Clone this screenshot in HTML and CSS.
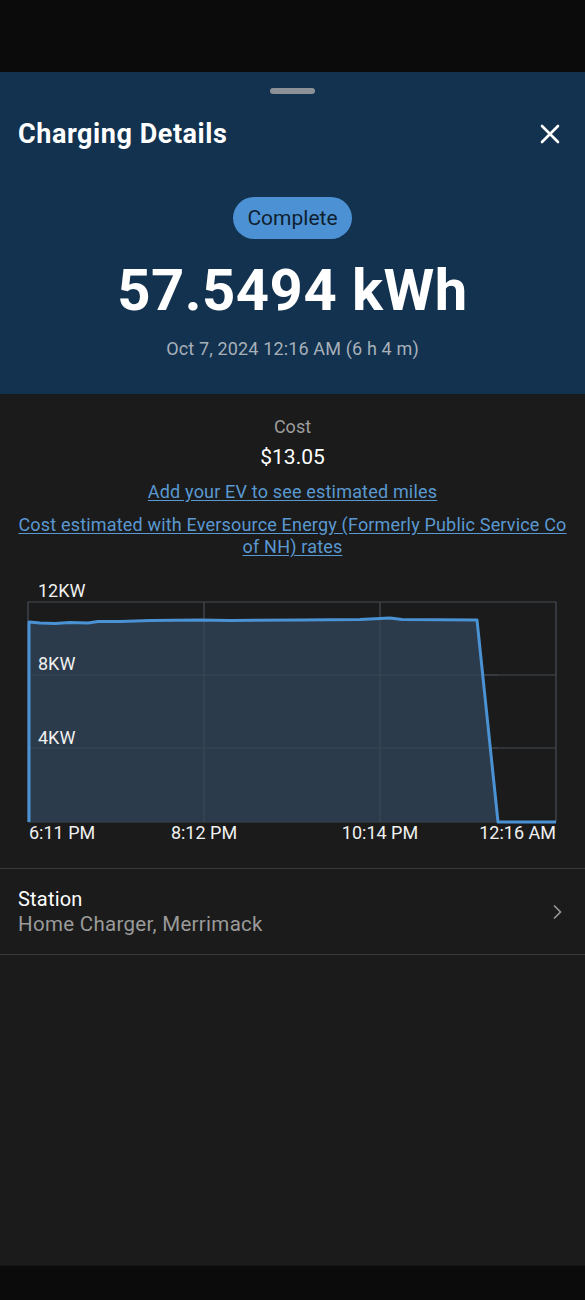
FILE: index.html
```html
<!DOCTYPE html>
<html lang="en">
<head>
    <meta charset="UTF-8">
    <meta name="viewport" content="width=device-width, initial-scale=1.0">
    <title>Charging Details</title>
    <link rel="stylesheet" href="styles.css">
</head>
<body>
    <div class="statusBar"></div>
    <div class="sheet">
        <div class="head">
            <div class="handle"></div>
            <div class="titleRow">
                <h1>Charging Details</h1>
                <svg class="close" width="20" height="20" viewBox="0 0 20 20"><path d="M2 2L18 18M18 2L2 18" stroke="#fff" stroke-width="2.6" stroke-linecap="round"/></svg>
            </div>
            <span class="pill">Complete</span>
            <div class="energy">57.5494 kWh</div>
            <div class="date">Oct 7, 2024 12:16 AM (6 h 4 m)</div>
        </div>

        <div class="summary">
            <div class="label">Cost</div>
            <div class="cost">$13.05</div>
            <a class="link" href="#">Add your EV to see estimated miles</a>
            <a class="link" href="#">Cost estimated with Eversource Energy (Formerly Public Service Co of NH) rates</a>
        </div>

        <svg class="chart" width="585" height="275" viewBox="0 0 585 275">
            <!-- grid -->
            <g stroke="#474c52" stroke-width="1.2">
                <line x1="28" y1="27" x2="556" y2="27"/>
                <line x1="28" y1="100" x2="556" y2="100"/>
                <line x1="28" y1="173" x2="556" y2="173"/>
                <line x1="28" y1="247" x2="556" y2="247"/>
                <line x1="28" y1="27" x2="28" y2="247"/>
                <line x1="204" y1="27" x2="204" y2="247"/>
                <line x1="380" y1="27" x2="380" y2="247"/>
                <line x1="556" y1="27" x2="556" y2="247"/>
            </g>
            <polygon fill="#2c3e4f" fill-opacity="0.92" points="28,247 28,47 40,48 55,48.5 70,47.5 88,48 98,46.5 120,46.5 150,45.5 200,45 230,45.5 300,45 360,44.5 390,43 402,44.5 477,45 498,247"/>
            <g stroke="#474c52" stroke-width="1" opacity="0.6">
                <line x1="28" y1="100" x2="498" y2="100"/>
                <line x1="28" y1="173" x2="498" y2="173"/>
                <line x1="204" y1="45" x2="204" y2="247"/>
                <line x1="380" y1="43" x2="380" y2="247"/>
            </g>
            <polyline fill="none" stroke="#4a92d4" stroke-width="3" stroke-linejoin="round" points="29,247 29,47 40,48 55,48.5 70,47.5 88,48 98,46.5 120,46.5 150,45.5 200,45 230,45.5 300,45 360,44.5 390,43 402,44.5 477,45 498,247 556,247"/>
            <g class="axis">
                <text x="38" y="22">12KW</text>
                <text x="38" y="95">8KW</text>
                <text x="38" y="169">4KW</text>
                <text x="29" y="264">6:11 PM</text>
                <text x="204" y="264" text-anchor="middle">8:12 PM</text>
                <text x="380" y="264" text-anchor="middle">10:14 PM</text>
                <text x="556" y="264" text-anchor="end">12:16 AM</text>
            </g>
        </svg>

        <div class="station">
            <div>
                <div class="stTitle">Station</div>
                <div class="stName">Home Charger, Merrimack</div>
            </div>
            <svg width="10" height="16" viewBox="0 0 10 16"><path d="M2 1.5L8.5 8L2 14.5" fill="none" stroke="#9a9a9a" stroke-width="1.6"/></svg>
        </div>
    </div>
    <div class="navBar"></div>
</body>
</html>
```

FILE: styles.css
```css
*{margin: 0; padding: 0; box-sizing: border-box;}
html, body{height: 100%;}
body{display: flex; flex-direction: column; background-color: #0b0b0b; font-family: Roboto, "Liberation Sans", sans-serif; color: #fff;}
.statusBar{height: 72px; background-color: #0b0b0b;}
.navBar{height: 35px; background-color: #0b0b0b; border-top: 1px solid #161616;}
.sheet{flex: 1; background-color: #1b1b1b;}

.head{height: 322px; background-color: #12324f; display: flex; flex-direction: column; align-items: center;}
.handle{width: 45px; height: 6px; margin-top: 16px; border-radius: 3px; background-color: #8c9197;}
.titleRow{width: 100%; display: flex; justify-content: space-between; align-items: center; margin-top: 24px; padding: 0 25px 0 18px; height: 32px;}
.titleRow h1{font-size: 27px; font-weight: 700; line-height: 32px; letter-spacing: 0.55px;}
.pill{margin-top: 47px; height: 42px; line-height: 42px; padding: 0 14px; border-radius: 21px; background-color: #4c91d3; color: #0f1f30; font-size: 21px;}
.energy{margin-top: 17px; font-size: 58px; font-weight: 700; line-height: 68px; letter-spacing: 0.5px;}
.date{margin-top: 14px; font-size: 18px; line-height: 22px; color: #a7b0b9; letter-spacing: 0.15px;}

.summary{display: flex; flex-direction: column; align-items: center; text-align: center; padding: 22px 10px 0;}
.label{font-size: 18px; line-height: 22px; color: #9d9d9d;}
.cost{margin-top: 6px; font-size: 21px; line-height: 26px;}
.link{margin-top: 11px; font-size: 18px; line-height: 22px; color: #5a98d1; letter-spacing: 0.18px; text-decoration: underline; text-underline-offset: 2px;}

.chart{display: block; margin-top: 17px;}
.axis{font-family: Roboto, "Liberation Sans", sans-serif; font-size: 18px; fill: #f0f0f0;}

.station{display: flex; justify-content: space-between; align-items: center; margin-top: 18px; padding: 18px 23px 18px 18px; border-top: 1px solid #3a3a3a; border-bottom: 1px solid #3a3a3a;}
.stTitle{font-size: 20px; line-height: 24px; letter-spacing: 0.2px;}
.stName{margin-top: 1px; font-size: 20.5px; line-height: 24px; color: #9a9a9a; letter-spacing: 0.3px;}
```
